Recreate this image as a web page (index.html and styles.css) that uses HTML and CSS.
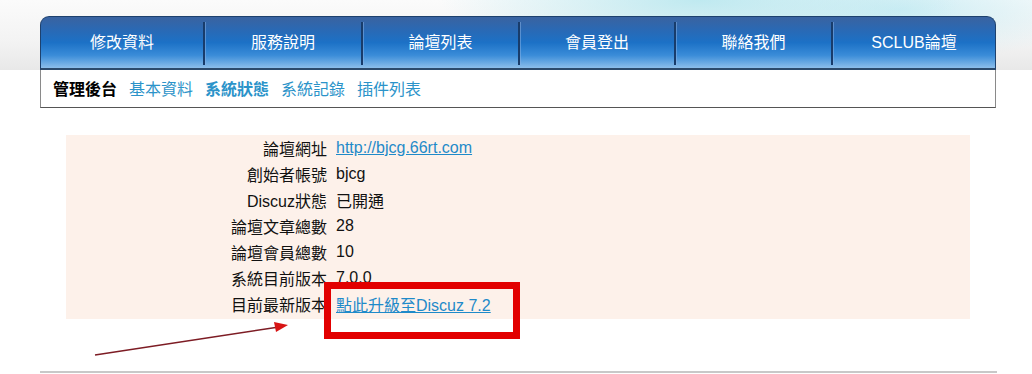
FILE: index.html
```html
<!DOCTYPE html>
<html lang="zh-Hant">
<head>
<meta charset="utf-8">
<title>管理後台 - 系統狀態</title>
<link rel="stylesheet" href="styles.css">
</head>
<body>
<div class="banner">
  <nav class="nav">
    <a class="tab" href="#">修改資料</a>
    <a class="tab" href="#">服務說明</a>
    <a class="tab" href="#">論壇列表</a>
    <a class="tab" href="#">會員登出</a>
    <a class="tab" href="#">聯絡我們</a>
    <a class="tab" href="#">SCLUB論壇</a>
  </nav>
</div>
<div class="page">
  <div class="subnav">
    <span class="sub-title">管理後台</span>
    <a class="sub-link" href="#">基本資料</a>
    <a class="sub-link active" href="#">系統狀態</a>
    <a class="sub-link" href="#">系統記錄</a>
    <a class="sub-link" href="#">插件列表</a>
  </div>
  <div class="panel">
    <div class="rows">
      <div class="label">論壇網址</div><div class="value"><a class="link" href="#">http://bjcg.66rt.com</a></div>
      <div class="label">創始者帳號</div><div class="value">bjcg</div>
      <div class="label">Discuz狀態</div><div class="value">已開通</div>
      <div class="label">論壇文章總數</div><div class="value">28</div>
      <div class="label">論壇會員總數</div><div class="value">10</div>
      <div class="label">系統目前版本</div><div class="value">7.0.0</div>
      <div class="label">目前最新版本</div><div class="value"><a class="link" href="#">點此升級至Discuz 7.2</a></div>
    </div>
    <div class="highlight"></div>
  </div>
  <svg class="arrow" width="210" height="40" viewBox="0 0 210 40">
    <line x1="2" y1="35" x2="186" y2="7" stroke="#7d1c24" stroke-width="1.6"/>
    <polygon points="195,5 181,2 183,12" fill="#d81414"/>
  </svg>
  <div class="rule"></div>
</div>
</body>
</html>
```
FILE: styles.css
```css
body {
  margin: 0;
  background: #ffffff;
  font-family: "Liberation Sans", "Noto Sans CJK TC", sans-serif;
  font-size: 16px;
  color: #111111;
}

a { text-decoration: none; }

.banner {
  height: 70px;
  padding: 16px 36px 0 40px;
  box-sizing: border-box;
  background:
    radial-gradient(ellipse 260px 60px at 700px 0px, rgba(180, 230, 238, 0.85), rgba(180, 230, 238, 0) 100%),
    radial-gradient(ellipse 200px 50px at 900px 10px, rgba(185, 232, 242, 0.7), rgba(185, 232, 242, 0) 100%),
    linear-gradient(to bottom, #fbfbfb 0%, #f3f3f3 60%, #e8e8e8 100%);
}

.nav {
  display: grid;
  grid-template-columns: 162px 158px 157px 156px 157px 1fr;
  width: 956px;
  height: 54px;
  box-sizing: border-box;
  border: 1px solid #1d416e;
  border-bottom: 2px solid #2c4a6c;
  border-radius: 9px 9px 0 0;
  background: linear-gradient(to bottom, #3a63a0 0%, #2a69b4 25%, #1c71c6 50%, #3a8cd8 75%, #8cbeeb 100%);
}

.tab {
  display: flex;
  align-items: center;
  justify-content: center;
  margin: 5px 0 3px;
  color: #ffffff;
  font-size: 16px;
  padding-bottom: 6px;
}

.tab + .tab {
  border-left: 2px solid #183c6b;
  box-shadow: inset 1px 0 0 rgba(140, 180, 230, 0.5);
}

.page {
  position: relative;
  width: 957px;
  margin-left: 40px;
}

.subnav {
  display: flex;
  align-items: center;
  gap: 12px;
  height: 38px;
  box-sizing: border-box;
  padding: 0 0 1px 12px;
  border: 1px solid #8a8a8a;
  border-top: none;
  border-bottom-color: #555555;
  width: 956px;
}

.sub-title {
  font-weight: bold;
  color: #000000;
}

.sub-link {
  color: #2b93c9;
}

.sub-link.active {
  font-weight: bold;
}

.panel {
  position: relative;
  margin: 27px 0 0 26px;
  width: 904px;
  height: 184px;
  background: #fdf1ea;
}

.rows {
  display: grid;
  grid-template-columns: 261px auto;
  column-gap: 9px;
  grid-auto-rows: 26px;
  align-items: center;
}

.label {
  text-align: right;
  white-space: nowrap;
}

.value {
  white-space: nowrap;
}

.link {
  color: #1f8ac9;
  text-decoration: underline;
}

.highlight {
  position: absolute;
  left: 258px;
  top: 147px;
  width: 196px;
  height: 57px;
  box-sizing: border-box;
  border: 7px solid #e20000;
}

.arrow {
  position: absolute;
  left: 53px;
  top: 250px;
}

.rule {
  margin-top: 52px;
  height: 2px;
  background: #c8c8c8;
  width: 957px;
}
```
